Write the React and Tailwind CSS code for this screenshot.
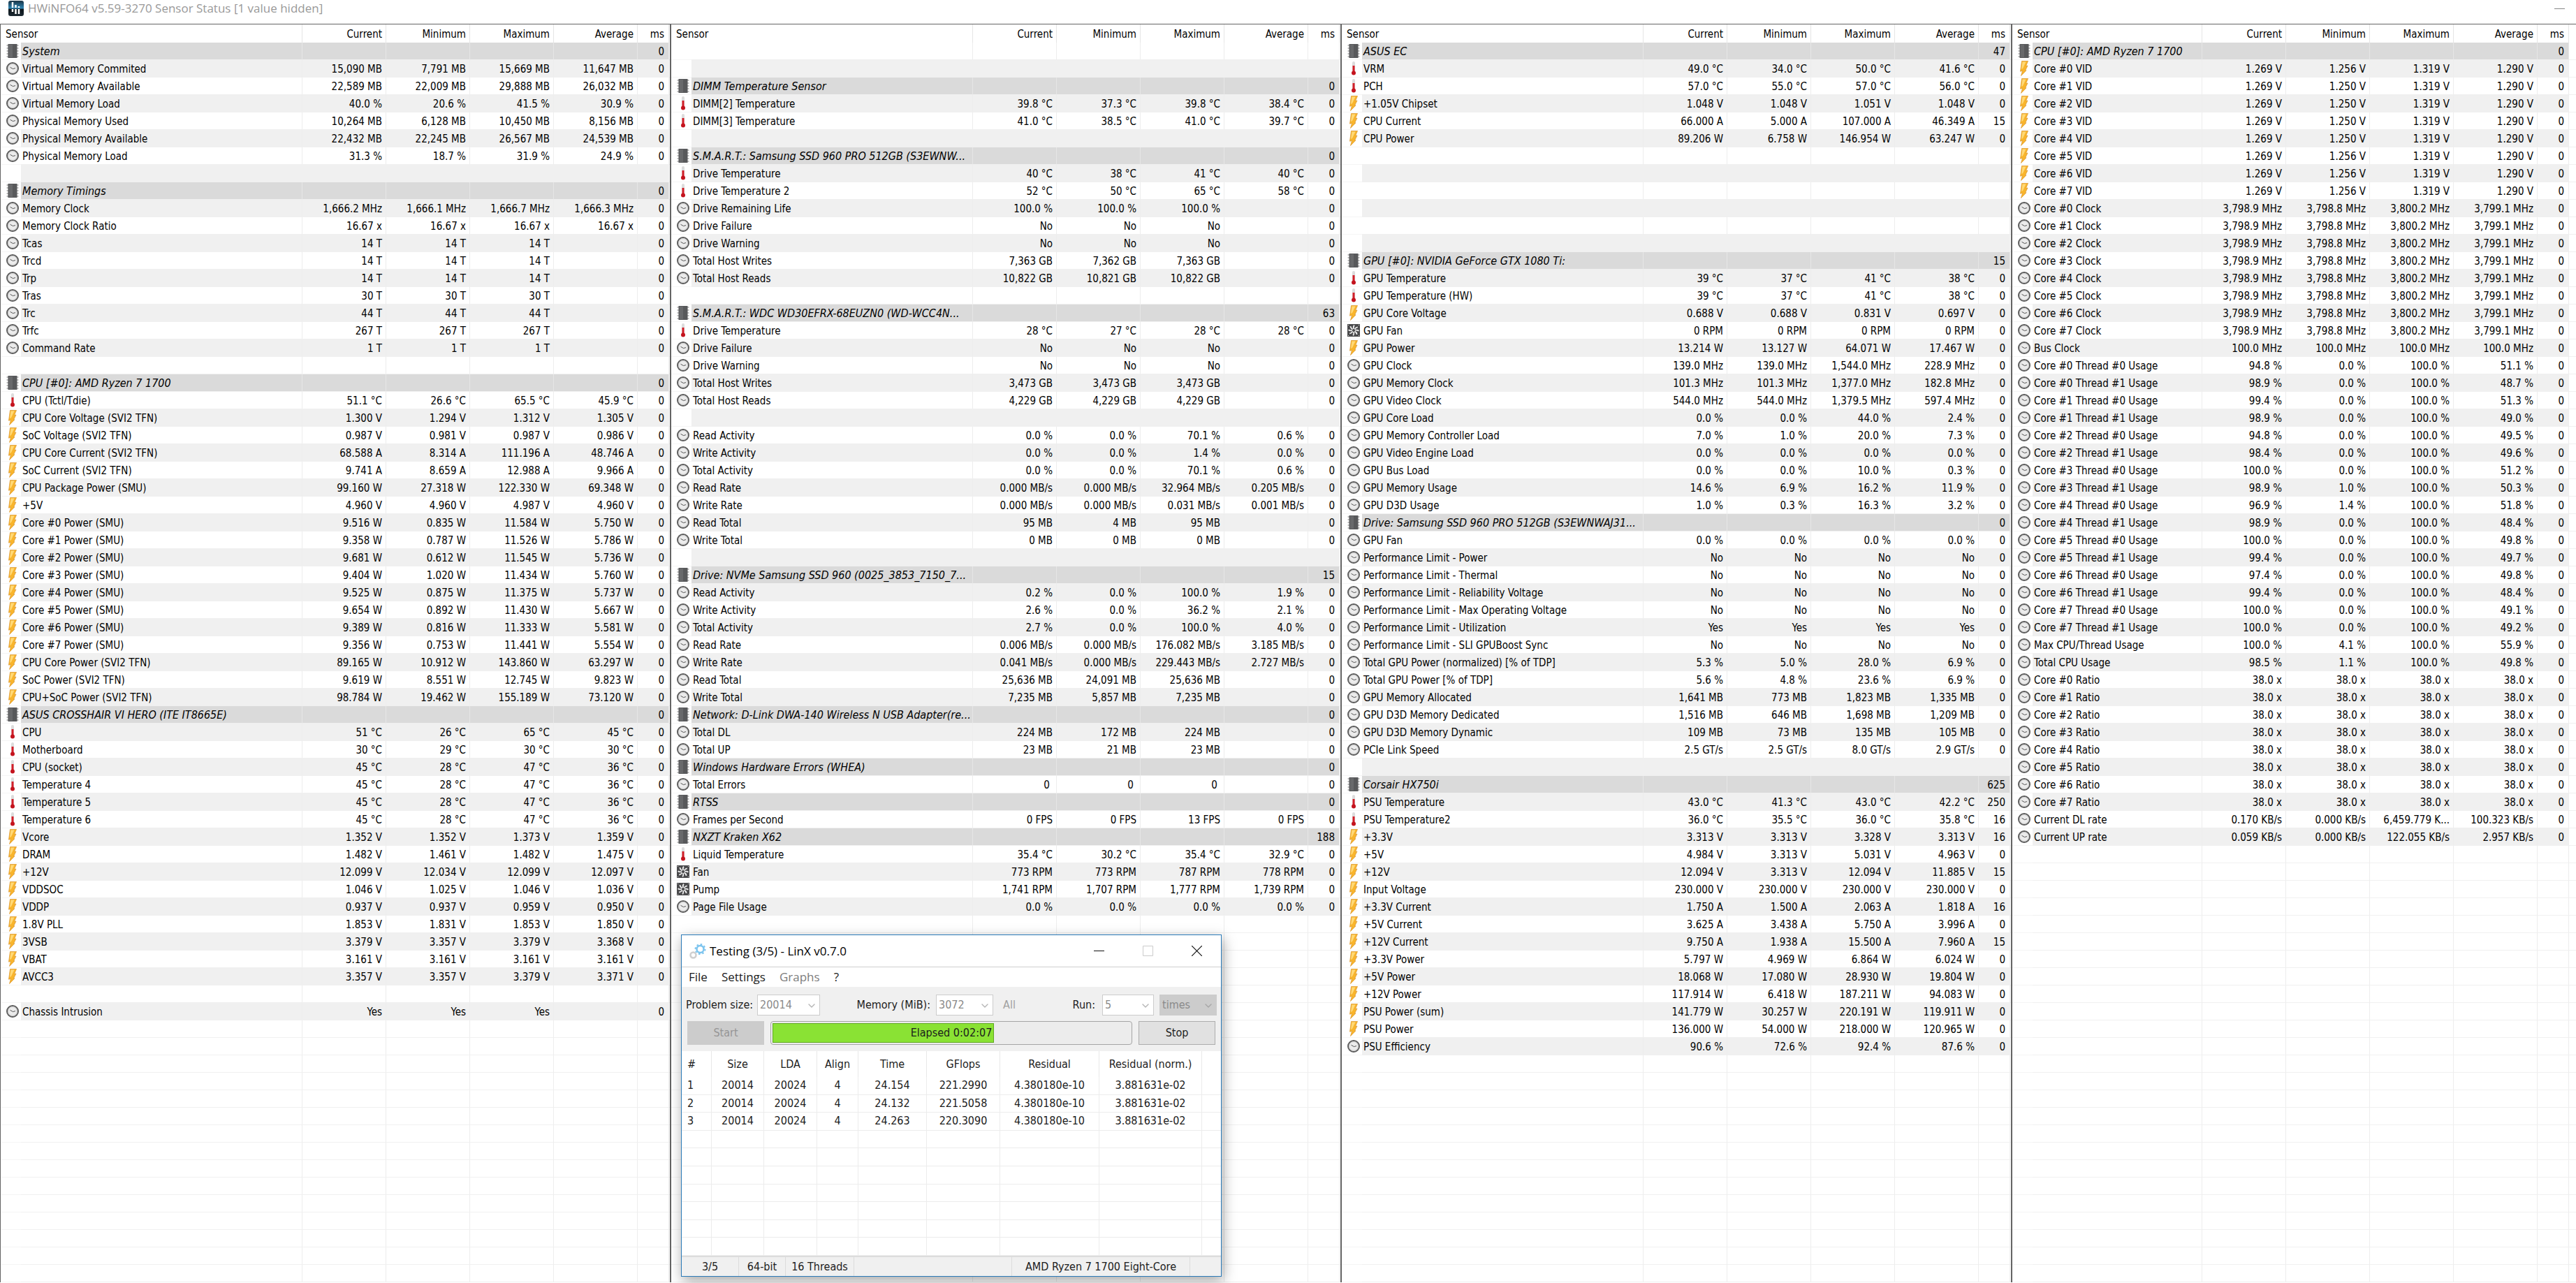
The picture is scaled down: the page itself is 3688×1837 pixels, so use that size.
import React from 'react';
import { ChevronDown } from 'lucide-react';

const same = (v) => [v, v, v, v];
const fill = (count) => Array.from({ length: count }, () => ({}));
const head = (name, ms = '0') => ({ type: 'head', name, ms });
const row = (type) => (name, values, ms = '0') => ({ type, name, values: values.split('|'), ms });
const clock = row('clock');
const bolt = row('bolt');
const temp = row('temp');
const fan = row('fan');

const ROW_COUNT = 71;

const systemRows = [
  head('System'),
  clock('Virtual Memory Commited', '15,090 MB|7,791 MB|15,669 MB|11,647 MB'),
  clock('Virtual Memory Available', '22,589 MB|22,009 MB|29,888 MB|26,032 MB'),
  clock('Virtual Memory Load', '40.0 %|20.6 %|41.5 %|30.9 %'),
  clock('Physical Memory Used', '10,264 MB|6,128 MB|10,450 MB|8,156 MB'),
  clock('Physical Memory Available', '22,432 MB|22,245 MB|26,567 MB|24,539 MB'),
  clock('Physical Memory Load', '31.3 %|18.7 %|31.9 %|24.9 %'),
  ...fill(1),
  head('Memory Timings'),
  clock('Memory Clock', '1,666.2 MHz|1,666.1 MHz|1,666.7 MHz|1,666.3 MHz'),
  clock('Memory Clock Ratio', '16.67 x|16.67 x|16.67 x|16.67 x'),
  clock('Tcas', '14 T|14 T|14 T|'),
  clock('Trcd', '14 T|14 T|14 T|'),
  clock('Trp', '14 T|14 T|14 T|'),
  clock('Tras', '30 T|30 T|30 T|'),
  clock('Trc', '44 T|44 T|44 T|'),
  clock('Trfc', '267 T|267 T|267 T|'),
  clock('Command Rate', '1 T|1 T|1 T|'),
  ...fill(1),
  head('CPU [#0]: AMD Ryzen 7 1700'),
  temp('CPU (Tctl/Tdie)', '51.1 °C|26.6 °C|65.5 °C|45.9 °C'),
  bolt('CPU Core Voltage (SVI2 TFN)', '1.300 V|1.294 V|1.312 V|1.305 V'),
  bolt('SoC Voltage (SVI2 TFN)', '0.987 V|0.981 V|0.987 V|0.986 V'),
  bolt('CPU Core Current (SVI2 TFN)', '68.588 A|8.314 A|111.196 A|48.746 A'),
  bolt('SoC Current (SVI2 TFN)', '9.741 A|8.659 A|12.988 A|9.966 A'),
  bolt('CPU Package Power (SMU)', '99.160 W|27.318 W|122.330 W|69.348 W'),
  bolt('+5V', '4.960 V|4.960 V|4.987 V|4.960 V'),
  bolt('Core #0 Power (SMU)', '9.516 W|0.835 W|11.584 W|5.750 W'),
  bolt('Core #1 Power (SMU)', '9.358 W|0.787 W|11.526 W|5.786 W'),
  bolt('Core #2 Power (SMU)', '9.681 W|0.612 W|11.545 W|5.736 W'),
  bolt('Core #3 Power (SMU)', '9.404 W|1.020 W|11.434 W|5.760 W'),
  bolt('Core #4 Power (SMU)', '9.525 W|0.875 W|11.375 W|5.737 W'),
  bolt('Core #5 Power (SMU)', '9.654 W|0.892 W|11.430 W|5.667 W'),
  bolt('Core #6 Power (SMU)', '9.389 W|0.816 W|11.333 W|5.581 W'),
  bolt('Core #7 Power (SMU)', '9.356 W|0.753 W|11.441 W|5.554 W'),
  bolt('CPU Core Power (SVI2 TFN)', '89.165 W|10.912 W|143.860 W|63.297 W'),
  bolt('SoC Power (SVI2 TFN)', '9.619 W|8.551 W|12.745 W|9.823 W'),
  bolt('CPU+SoC Power (SVI2 TFN)', '98.784 W|19.462 W|155.189 W|73.120 W'),
  head('ASUS CROSSHAIR VI HERO (ITE IT8665E)'),
  temp('CPU', '51 °C|26 °C|65 °C|45 °C'),
  temp('Motherboard', '30 °C|29 °C|30 °C|30 °C'),
  temp('CPU (socket)', '45 °C|28 °C|47 °C|36 °C'),
  temp('Temperature 4', '45 °C|28 °C|47 °C|36 °C'),
  temp('Temperature 5', '45 °C|28 °C|47 °C|36 °C'),
  temp('Temperature 6', '45 °C|28 °C|47 °C|36 °C'),
  bolt('Vcore', '1.352 V|1.352 V|1.373 V|1.359 V'),
  bolt('DRAM', '1.482 V|1.461 V|1.482 V|1.475 V'),
  bolt('+12V', '12.099 V|12.034 V|12.099 V|12.097 V'),
  bolt('VDDSOC', '1.046 V|1.025 V|1.046 V|1.036 V'),
  bolt('VDDP', '0.937 V|0.937 V|0.959 V|0.950 V'),
  bolt('1.8V PLL', '1.853 V|1.831 V|1.853 V|1.850 V'),
  bolt('3VSB', '3.379 V|3.357 V|3.379 V|3.368 V'),
  bolt('VBAT', '3.161 V|3.161 V|3.161 V|3.161 V'),
  bolt('AVCC3', '3.357 V|3.357 V|3.379 V|3.371 V'),
  ...fill(1),
  clock('Chassis Intrusion', 'Yes|Yes|Yes|'),
];

const driveRows = [
  ...fill(2),
  head('DIMM Temperature Sensor'),
  temp('DIMM[2] Temperature', '39.8 °C|37.3 °C|39.8 °C|38.4 °C'),
  temp('DIMM[3] Temperature', '41.0 °C|38.5 °C|41.0 °C|39.7 °C'),
  ...fill(1),
  head('S.M.A.R.T.: Samsung SSD 960 PRO 512GB (S3EWNW...'),
  temp('Drive Temperature', '40 °C|38 °C|41 °C|40 °C'),
  temp('Drive Temperature 2', '52 °C|50 °C|65 °C|58 °C'),
  clock('Drive Remaining Life', '100.0 %|100.0 %|100.0 %|'),
  clock('Drive Failure', 'No|No|No|'),
  clock('Drive Warning', 'No|No|No|'),
  clock('Total Host Writes', '7,363 GB|7,362 GB|7,363 GB|'),
  clock('Total Host Reads', '10,822 GB|10,821 GB|10,822 GB|'),
  ...fill(1),
  head('S.M.A.R.T.: WDC WD30EFRX-68EUZN0 (WD-WCC4N...', '63'),
  temp('Drive Temperature', '28 °C|27 °C|28 °C|28 °C'),
  clock('Drive Failure', 'No|No|No|'),
  clock('Drive Warning', 'No|No|No|'),
  clock('Total Host Writes', '3,473 GB|3,473 GB|3,473 GB|'),
  clock('Total Host Reads', '4,229 GB|4,229 GB|4,229 GB|'),
  ...fill(1),
  clock('Read Activity', '0.0 %|0.0 %|70.1 %|0.6 %'),
  clock('Write Activity', '0.0 %|0.0 %|1.4 %|0.0 %'),
  clock('Total Activity', '0.0 %|0.0 %|70.1 %|0.6 %'),
  clock('Read Rate', '0.000 MB/s|0.000 MB/s|32.964 MB/s|0.205 MB/s'),
  clock('Write Rate', '0.000 MB/s|0.000 MB/s|0.031 MB/s|0.001 MB/s'),
  clock('Read Total', '95 MB|4 MB|95 MB|'),
  clock('Write Total', '0 MB|0 MB|0 MB|'),
  ...fill(1),
  head('Drive: NVMe Samsung SSD 960 (0025_3853_7150_7...', '15'),
  clock('Read Activity', '0.2 %|0.0 %|100.0 %|1.9 %'),
  clock('Write Activity', '2.6 %|0.0 %|36.2 %|2.1 %'),
  clock('Total Activity', '2.7 %|0.0 %|100.0 %|4.0 %'),
  clock('Read Rate', '0.006 MB/s|0.000 MB/s|176.082 MB/s|3.185 MB/s'),
  clock('Write Rate', '0.041 MB/s|0.000 MB/s|229.443 MB/s|2.727 MB/s'),
  clock('Read Total', '25,636 MB|24,091 MB|25,636 MB|'),
  clock('Write Total', '7,235 MB|5,857 MB|7,235 MB|'),
  head('Network: D-Link DWA-140 Wireless N USB Adapter(re...'),
  clock('Total DL', '224 MB|172 MB|224 MB|'),
  clock('Total UP', '23 MB|21 MB|23 MB|'),
  head('Windows Hardware Errors (WHEA)'),
  clock('Total Errors', '0\u00a0|0\u00a0|0\u00a0|'),
  head('RTSS'),
  clock('Frames per Second', '0 FPS|0 FPS|13 FPS|0 FPS'),
  head('NXZT Kraken X62', '188'),
  temp('Liquid Temperature', '35.4 °C|30.2 °C|35.4 °C|32.9 °C'),
  fan('Fan', '773 RPM|773 RPM|787 RPM|778 RPM'),
  fan('Pump', '1,741 RPM|1,707 RPM|1,777 RPM|1,739 RPM'),
  clock('Page File Usage', '0.0 %|0.0 %|0.0 %|0.0 %'),
];

const gpuRows = [
  head('ASUS EC', '47'),
  temp('VRM', '49.0 °C|34.0 °C|50.0 °C|41.6 °C'),
  temp('PCH', '57.0 °C|55.0 °C|57.0 °C|56.0 °C'),
  bolt('+1.05V Chipset', '1.048 V|1.048 V|1.051 V|1.048 V'),
  bolt('CPU Current', '66.000 A|5.000 A|107.000 A|46.349 A', '15'),
  bolt('CPU Power', '89.206 W|6.758 W|146.954 W|63.247 W'),
  ...fill(6),
  head('GPU [#0]: NVIDIA GeForce GTX 1080 Ti:', '15'),
  temp('GPU Temperature', '39 °C|37 °C|41 °C|38 °C'),
  temp('GPU Temperature (HW)', '39 °C|37 °C|41 °C|38 °C'),
  bolt('GPU Core Voltage', '0.688 V|0.688 V|0.831 V|0.697 V'),
  fan('GPU Fan', '0 RPM|0 RPM|0 RPM|0 RPM'),
  bolt('GPU Power', '13.214 W|13.127 W|64.071 W|17.467 W'),
  clock('GPU Clock', '139.0 MHz|139.0 MHz|1,544.0 MHz|228.9 MHz'),
  clock('GPU Memory Clock', '101.3 MHz|101.3 MHz|1,377.0 MHz|182.8 MHz'),
  clock('GPU Video Clock', '544.0 MHz|544.0 MHz|1,379.5 MHz|597.4 MHz'),
  clock('GPU Core Load', '0.0 %|0.0 %|44.0 %|2.4 %'),
  clock('GPU Memory Controller Load', '7.0 %|1.0 %|20.0 %|7.3 %'),
  clock('GPU Video Engine Load', '0.0 %|0.0 %|0.0 %|0.0 %'),
  clock('GPU Bus Load', '0.0 %|0.0 %|10.0 %|0.3 %'),
  clock('GPU Memory Usage', '14.6 %|6.9 %|16.2 %|11.9 %'),
  clock('GPU D3D Usage', '1.0 %|0.3 %|16.3 %|3.2 %'),
  head('Drive: Samsung SSD 960 PRO 512GB (S3EWNWAJ31...'),
  clock('GPU Fan', '0.0 %|0.0 %|0.0 %|0.0 %'),
  clock('Performance Limit - Power', 'No|No|No|No'),
  clock('Performance Limit - Thermal', 'No|No|No|No'),
  clock('Performance Limit - Reliability Voltage', 'No|No|No|No'),
  clock('Performance Limit - Max Operating Voltage', 'No|No|No|No'),
  clock('Performance Limit - Utilization', 'Yes|Yes|Yes|Yes'),
  clock('Performance Limit - SLI GPUBoost Sync', 'No|No|No|No'),
  clock('Total GPU Power (normalized) [% of TDP]', '5.3 %|5.0 %|28.0 %|6.9 %'),
  clock('Total GPU Power [% of TDP]', '5.6 %|4.8 %|23.6 %|6.9 %'),
  clock('GPU Memory Allocated', '1,641 MB|773 MB|1,823 MB|1,335 MB'),
  clock('GPU D3D Memory Dedicated', '1,516 MB|646 MB|1,698 MB|1,209 MB'),
  clock('GPU D3D Memory Dynamic', '109 MB|73 MB|135 MB|105 MB'),
  clock('PCIe Link Speed', '2.5 GT/s|2.5 GT/s|8.0 GT/s|2.9 GT/s'),
  ...fill(1),
  head('Corsair HX750i', '625'),
  temp('PSU Temperature', '43.0 °C|41.3 °C|43.0 °C|42.2 °C', '250'),
  temp('PSU Temperature2', '36.0 °C|35.5 °C|36.0 °C|35.8 °C', '16'),
  bolt('+3.3V', '3.313 V|3.313 V|3.328 V|3.313 V', '16'),
  bolt('+5V', '4.984 V|3.313 V|5.031 V|4.963 V'),
  bolt('+12V', '12.094 V|3.313 V|12.094 V|11.885 V', '15'),
  bolt('Input Voltage', '230.000 V|230.000 V|230.000 V|230.000 V'),
  bolt('+3.3V Current', '1.750 A|1.500 A|2.063 A|1.818 A', '16'),
  bolt('+5V Current', '3.625 A|3.438 A|5.750 A|3.996 A'),
  bolt('+12V Current', '9.750 A|1.938 A|15.500 A|7.960 A', '15'),
  bolt('+3.3V Power', '5.797 W|4.969 W|6.864 W|6.024 W'),
  bolt('+5V Power', '18.068 W|17.080 W|28.930 W|19.804 W'),
  bolt('+12V Power', '117.914 W|6.418 W|187.211 W|94.083 W'),
  bolt('PSU Power (sum)', '141.779 W|30.257 W|220.191 W|119.911 W'),
  bolt('PSU Power', '136.000 W|54.000 W|218.000 W|120.965 W'),
  clock('PSU Efficiency', '90.6 %|72.6 %|92.4 %|87.6 %'),
];

const vidMinimums = ['1.256', '1.250', '1.250', '1.250', '1.250', '1.256', '1.256', '1.256'];

// current, minimum, average for each thread, two threads per core
const threadUsage = [
  ['94.8', '0.0', '51.1'],
  ['98.9', '0.0', '48.7'],
  ['99.4', '0.0', '51.3'],
  ['98.9', '0.0', '49.0'],
  ['94.8', '0.0', '49.5'],
  ['98.4', '0.0', '49.6'],
  ['100.0', '0.0', '51.2'],
  ['98.9', '1.0', '50.3'],
  ['96.9', '1.4', '51.8'],
  ['98.9', '0.0', '48.4'],
  ['100.0', '0.0', '49.8'],
  ['99.4', '0.0', '49.7'],
  ['97.4', '0.0', '49.8'],
  ['99.4', '0.0', '48.4'],
  ['100.0', '0.0', '49.1'],
  ['100.0', '0.0', '49.2'],
];

const cpuRows = [
  head('CPU [#0]: AMD Ryzen 7 1700'),
  ...vidMinimums.map((min, i) => bolt(`Core #${i} VID`, `1.269 V|${min} V|1.319 V|1.290 V`)),
  ...vidMinimums.map((_, i) =>
    clock(`Core #${i} Clock`, '3,798.9 MHz|3,798.8 MHz|3,800.2 MHz|3,799.1 MHz')
  ),
  clock('Bus Clock', same('100.0 MHz').join('|')),
  ...threadUsage.map(([cur, min, avg], i) =>
    clock(
      `Core #${Math.floor(i / 2)} Thread #${i % 2} Usage`,
      `${cur} %|${min} %|100.0 %|${avg} %`
    )
  ),
  clock('Max CPU/Thread Usage', '100.0 %|4.1 %|100.0 %|55.9 %'),
  clock('Total CPU Usage', '98.5 %|1.1 %|100.0 %|49.8 %'),
  ...vidMinimums.map((_, i) => clock(`Core #${i} Ratio`, same('38.0 x').join('|'))),
  clock('Current DL rate', '0.170 KB/s|0.000 KB/s|6,459.779 K...|100.323 KB/s'),
  clock('Current UP rate', '0.059 KB/s|0.000 KB/s|122.055 KB/s|2.957 KB/s'),
];

const ChipIcon = () => (
  <svg viewBox="0 0 18 20" className="block w-[18px] h-5">
    {[2, 6, 10, 14, 18].map((y) => (
      <path key={y} d={`M0.500 ${y}h17`} stroke="#a8a8a8" strokeWidth="1.500" />
    ))}
    <rect x="2.500" y="0" width="13" height="20" fill="#58595b" />
    <rect x="4" y="1" width="5" height="18" fill="#68696b" />
  </svg>
);

const ClockIcon = () => (
  <svg viewBox="0 0 18 20" className="block w-[18px] h-5">
    <circle cx="9" cy="10" r="8" fill="#ececec" stroke="#5d5d5d" strokeWidth="2" />
    <circle cx="9" cy="10" r="6.300" fill="none" stroke="#cfcfcf" />
    <path d="M5.500 8.300L9.500 10.600L13 9.600" fill="none" stroke="#555" />
  </svg>
);

const TempIcon = () => (
  <svg viewBox="0 0 18 20" className="block w-[18px] h-5">
    <rect x="7" y="0" width="4" height="15" rx="2" fill="#dcdcdc" />
    <rect x="7.500" y="6" width="3" height="10" fill="#d3202a" />
    <circle cx="9" cy="16.500" r="3" fill="#c4141e" />
  </svg>
);

const BoltIcon = () => (
  <svg viewBox="0 0 18 22" className="block w-[18px] h-[22px]">
    <path
      d="M5.500 0.500L14.500 0.500L11.500 7.500L14 7L10.500 14L12 13.800L4.500 21.500L6.500 14.500L3.500 15.200Z"
      fill="#f9b52c"
      stroke="#d8922a"
      strokeWidth="0.700"
    />
    <path d="M6.500 1.500L11.500 1.500L7 11L5 12Z" fill="#ffd977" />
  </svg>
);

const FanIcon = () => (
  <svg viewBox="0 0 18 20" className="block w-[18px] h-5">
    <rect x="0" y="1" width="18" height="18" fill="#4a4a4c" />
    {[0, 45, 90, 135, 180, 225, 270, 315].map((a) => (
      <path
        key={a}
        d="M9 8Q8 5 9.800 2.600"
        fill="none"
        stroke="#f0f0f0"
        strokeWidth="1.800"
        transform={`rotate(${a} 9 10)`}
      />
    ))}
    <circle cx="9" cy="10" r="1.500" fill="#4a4a4c" />
    <path d="M1 2.500h1M16 2.500h1M1 17.500h1M16 17.500h1" stroke="#ddd" />
  </svg>
);

const icons = { head: ChipIcon, clock: ClockIcon, temp: TempIcon, bolt: BoltIcon, fan: FanIcon };

const AppLogo = () => (
  <svg viewBox="0 0 22 22" className="w-[22px] h-[22px]">
    <defs>
      <linearGradient id="logo" x1="0" y1="0" x2="0" y2="1">
        <stop offset="0" stopColor="#1a3344" />
        <stop offset="0.500" stopColor="#2f86b4" />
        <stop offset="0.550" stopColor="#0c1419" />
        <stop offset="1" stopColor="#1d2a33" />
      </linearGradient>
    </defs>
    <rect width="22" height="22" rx="3" fill="url(#logo)" />
    <path d="M6 2v8M10.500 6v4M15 8v2" stroke="#fff" strokeWidth="2.500" />
    <path d="M6 12v4M10.500 12v7M15 12v7" stroke="#fff" strokeWidth="2.500" />
  </svg>
);

const GearsIcon = () => (
  <svg viewBox="0 0 24 22" className="w-6 h-[22px]">
    <circle cx="15.500" cy="8" r="5" fill="none" stroke="#7cc4ee" strokeWidth="2.500" />
    <circle
      cx="15.500"
      cy="8"
      r="7"
      fill="none"
      stroke="#7cc4ee"
      strokeWidth="2"
      strokeDasharray="2.500 3"
    />
    <circle cx="5.500" cy="16.500" r="4" fill="none" stroke="#cfcfcf" strokeWidth="2.500" />
  </svg>
);

const SensorRow = ({ item, striped }) => {
  const Icon = icons[item.type];
  const isHead = item.type === 'head';
  const values = item.values || ['', '', '', ''];
  const blank = striped && !item.type;
  const bg = isHead ? 'bg-[#dadada]' : striped ? 'bg-[#f0f0f0]' : 'bg-white';
  const line = isHead ? 'border-[#e6e6e6]' : blank ? 'border-[#f0f0f0]' : 'border-[#ededed]';
  const cell = `h-[25px] p-0 pt-[2px] border-b border-b-[#f0f0f0] ${bg}`;
  return (
    <tr>
      <td className="h-[25px] p-0 pl-2 bg-white border-b border-[#f5f5f5]">{Icon && <Icon />}</td>
      <td
        className={`${cell} border-r ${line} pl-[2px] overflow-hidden ${isHead ? 'italic text-base leading-5' : ''}`}
      >
        {item.name}
      </td>
      {values.map((value, i) => (
        <td key={i} className={`${cell} border-r ${line} pr-[5px] text-right`}>
          {value}
        </td>
      ))}
      <td className={`${cell} border-r ${line} pr-[6px] text-right`}>{item.ms}</td>
      <td className="p-0 border-b border-[#f0f0f0]" />
    </tr>
  );
};

const SensorPanel = ({ rows, last }) => {
  const all = [...rows, ...fill(ROW_COUNT - rows.length)];
  const th = 'h-[26px] p-0 pt-[2px] font-normal border-r border-[#e5e5e5]';
  return (
    <section className={`border-l border-t border-[#646464] ${last ? '' : 'border-r'}`}>
      <table className="w-full table-fixed border-separate border-spacing-0 text-[15px] leading-5 whitespace-nowrap">
        <colgroup>
          <col className="w-[29px]" />
          <col />
          <col className="w-[120px]" />
          <col className="w-[120px]" />
          <col className="w-[120px]" />
          <col className="w-[120px]" />
          <col className="w-[45px]" />
          <col className={last ? 'w-[10px]' : 'w-px'} />
        </colgroup>
        <thead>
          <tr>
            <th colSpan={2} className={`${th} pl-[7px] text-left`}>Sensor</th>
            <th className={`${th} pr-[5px] text-right`}>Current</th>
            <th className={`${th} pr-[5px] text-right`}>Minimum</th>
            <th className={`${th} pr-[5px] text-right`}>Maximum</th>
            <th className={`${th} pr-[5px] text-right`}>Average</th>
            <th className={`${th} pr-[6px] text-right`}>ms</th>
            <th className="p-0" />
          </tr>
        </thead>
        <tbody>
          {all.map((item, i) => (
            <SensorRow key={i} item={item} striped={i < rows.length && i % 2 === 1} />
          ))}
        </tbody>
      </table>
    </section>
  );
};

const Picker = ({ id, value, className, dark }) => (
  <div className={`relative h-[30px] ${className}`}>
    <select
      id={id}
      disabled
      defaultValue={value}
      aria-label={id}
      className={`appearance-none w-full h-full pl-[3px] border border-[#cccccc] text-[#8a8a8a] opacity-100 ${
        dark ? 'bg-[#cccccc]' : 'bg-white'
      }`}
    >
      <option>{value}</option>
    </select>
    <ChevronDown
      strokeWidth={2}
      className={`absolute right-1 top-2 w-4 h-4 ${dark ? 'text-[#a6a6a6]' : 'text-[#b4b4b4]'}`}
    />
  </div>
);

const results = [
  ['1', '20014', '20024', '4', '24.154', '221.2990', '4.380180e-10', '3.881631e-02'],
  ['2', '20014', '20024', '4', '24.132', '221.5058', '4.380180e-10', '3.881631e-02'],
  ['3', '20014', '20024', '4', '24.263', '220.3090', '4.380180e-10', '3.881631e-02'],
];
const resultHeads = ['#', 'Size', 'LDA', 'Align', 'Time', 'GFlops', 'Residual', 'Residual (norm.)'];

const ResultsTable = () => {
  const lines = [...results, ...Array.from({ length: 7 }, () => Array(8).fill(''))];
  return (
    <table className="w-full h-[293px] table-fixed border-separate border-spacing-0 bg-white text-center whitespace-nowrap">
      <colgroup>
        <col className="w-[43px]" />
        <col className="w-[75px]" />
        <col className="w-[76px]" />
        <col className="w-[59px]" />
        <col className="w-[98px]" />
        <col className="w-[105px]" />
        <col className="w-[142px]" />
        <col className="w-[147px]" />
        <col />
      </colgroup>
      <thead>
        <tr>
          {resultHeads.map((name, i) => (
            <th
              key={name}
              className={`h-[37px] p-0 font-normal border-r border-[#e8e8e8] ${i ? '' : 'text-left pl-[8px]'}`}
            >
              {name}
            </th>
          ))}
          <th className="p-0" />
        </tr>
      </thead>
      <tbody>
        {lines.map((cells, r) => (
          <tr key={r}>
            {cells.map((value, i) => (
              <td
                key={i}
                className={`h-[25px] p-0 border-r border-b border-[#ececec] ${i ? '' : 'text-left pl-[8px]'}`}
              >
                {value}
              </td>
            ))}
            <td className="p-0 border-b border-[#ececec]" />
          </tr>
        ))}
      </tbody>
    </table>
  );
};

const LinxWindow = () => (
  <div className="absolute left-[975px] top-[1338px] w-[774px] border border-[#2a7ab8] bg-[#f0f0f0] shadow-[2px_6px_18px_rgba(0,0,0,0.35)] font-['DejaVu_Sans_Condensed','Noto_Sans',sans-serif] text-base leading-5 text-[#1c1c1c]">
    <div className="flex items-center h-[46px] pl-[11px] bg-white border-b border-[#cfcfcf]">
      <GearsIcon />
      <h2 className="flex-1 pl-[5px] font-['Open_Sans',sans-serif] text-[17px] text-black">
        Testing (3/5) - LinX v0.7.0
      </h2>
      <button aria-label="Minimize" className="flex justify-center w-[70px]">
        <svg viewBox="0 0 15 15" className="w-[15px] h-[15px]">
          <path d="M0 7.500h15" stroke="#111" />
        </svg>
      </button>
      <button aria-label="Maximize" disabled className="flex justify-center w-[70px]">
        <svg viewBox="0 0 15 15" className="w-[15px] h-[15px]">
          <path d="M0.500 0.500h14v14h-14z" fill="none" stroke="#cccccc" />
        </svg>
      </button>
      <button aria-label="Close" className="flex justify-center w-[70px]">
        <svg viewBox="0 0 15 15" className="w-[15px] h-[15px]">
          <path d="M0 0L15 15M15 0L0 15" stroke="#111" strokeWidth="1.200" />
        </svg>
      </button>
    </div>
    <div className="flex items-center gap-5 h-7 pl-[10px] bg-white font-['Open_Sans',sans-serif] text-[17px]">
      <button>File</button>
      <button>Settings</button>
      <button disabled className="text-[#7d7d7d]">Graphs</button>
      <button>?</button>
    </div>
    <div className="flex items-center h-[46px] pt-[6px] px-[6px]">
      <label htmlFor="problem-size" className="w-[102px]">Problem size:</label>
      <Picker id="problem-size" value="20014" className="w-[90px]" />
      <label htmlFor="memory" className="flex-1 pr-2 text-right">Memory (MiB):</label>
      <Picker id="memory" value="3072" className="w-[82px]" />
      <button disabled className="w-[46px] text-[#a0a0a0]">All</button>
      <label htmlFor="run" className="w-[110px] pr-[10px] text-right">Run:</label>
      <Picker id="run" value="5" className="w-[74px] mr-2" />
      <Picker id="times" value="times" className="w-[82px]" dark />
    </div>
    <div className="flex items-center gap-[9px] h-[46px] px-2 pb-[6px]">
      <button disabled className="w-[110px] h-[34px] bg-[#cccccc] text-[#959595]">Start</button>
      <div className="relative flex-1 h-[34px] p-[2px] border border-[#a5a5a5] rounded bg-[#ececec]">
        <div className="w-[62%] h-full border border-[#5fa81f] bg-[#8ae234]" />
        <span className="absolute inset-0 flex items-center justify-center">Elapsed 0:02:07</span>
      </div>
      <button className="w-[110px] h-[34px] border border-[#adadad] bg-[#e1e1e1]">Stop</button>
    </div>
    <ResultsTable />
    <div className="flex h-[29px] border-t-2 border-[#dcdcdc] text-center leading-7">
      <div className="w-[82px] border-r border-[#dcdcdc]">3/5</div>
      <div className="w-[67px] border-r border-[#dcdcdc]">64-bit</div>
      <div className="w-[98px] border-r border-[#dcdcdc]">16 Threads</div>
      <div className="flex-1 border-r border-[#dcdcdc]" />
      <div className="w-[255px] border-r border-[#dcdcdc]">AMD Ryzen 7 1700 Eight-Core</div>
      <div className="w-[44px]" />
    </div>
  </div>
);

const App = () => {
  return (
    <div className="relative min-h-screen bg-white text-black font-['DejaVu_Sans_Condensed','Noto_Sans',sans-serif] overflow-hidden">
      <header className="flex items-center h-[34px] pl-3 pr-4 pb-[10px]">
        <AppLogo />
        <h1 className="flex-1 pl-[6px] font-['Open_Sans',sans-serif] text-[17px] leading-6 text-[#999999]">
          HWiNFO64 v5.59-3270 Sensor Status [1 value hidden]
        </h1>
        <button aria-label="Minimize">
          <svg viewBox="0 0 15 15" className="w-[15px] h-[15px]">
            <path d="M0 7.500h15" stroke="#888" />
          </svg>
        </button>
      </header>
      <main className="grid grid-cols-[960fr_960fr_960fr_808fr]">
        <SensorPanel rows={systemRows} />
        <SensorPanel rows={driveRows} />
        <SensorPanel rows={gpuRows} />
        <SensorPanel rows={cpuRows} last />
      </main>
      <LinxWindow />
    </div>
  );
};

export default App;
